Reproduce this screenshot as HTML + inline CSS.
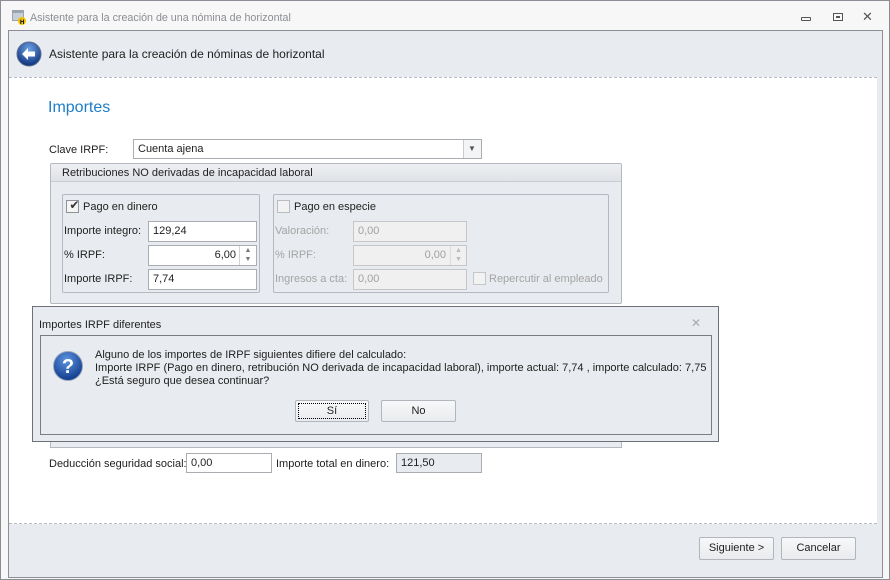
<!DOCTYPE html>
<html><head><meta charset="utf-8"><style>
*{box-sizing:border-box;margin:0;padding:0}
body{width:890px;height:580px;position:relative;background:#f4f4f4;font-family:"Liberation Sans",sans-serif;font-size:11px;color:#1e1e1e;overflow:hidden}
.a{position:absolute}
.t{position:absolute;white-space:nowrap;line-height:14px}
.in{position:absolute;background:#fff;border:1px solid #a9acb1;padding:2px 4px;line-height:14px}
.dis{background:#f0f0f0;border-color:#c4c6ca;color:#a0a0a0}
.g{color:#a4a4a4}
.btn{position:absolute;border:1px solid #b2b6bc;border-radius:2px;background:linear-gradient(#f7f8f9,#e9ebee);text-align:center;line-height:20px}
.cb{position:absolute;width:13px;height:13px;border:1px solid #8e9298;background:#fff}
</style></head><body>
<div class="a" style="left:0;top:0;width:890px;height:580px;border:1px solid #8a8e94;background:#f7f7f7"></div>
<svg class="a" style="left:11px;top:9px" width="16" height="16"><rect x="1" y="1" width="12" height="11" fill="#9aa4ae"/><rect x="2" y="4" width="10" height="7" fill="#c7ced6"/><circle cx="11" cy="12" r="4" fill="#f2c200"/><text x="9" y="15" font-size="6" font-weight="bold" fill="#000">H</text></svg>
<div class="t" style="left:30px;top:11px;color:#8a8d92;font-size:10.7px">Asistente para la creación de una nómina de horizontal</div>
<div class="a" style="left:801px;top:17px;width:10px;height:4px;border:1px solid #555;border-radius:1px"></div>
<div class="a" style="left:833px;top:13px;width:10px;height:8px;border:1px solid #555"></div>
<div class="a" style="left:836px;top:16px;width:4px;height:2px;border:1px solid #555"></div>
<div class="t" style="left:862px;top:10px;font-size:13px;color:#555">✕</div>

<div class="a" style="left:8px;top:30px;width:875px;height:548px;border:1px solid #8c9096;background:#e8ebef"></div>
<svg class="a" style="left:16px;top:41px" width="26" height="26"><defs><radialGradient id="b" cx="0.5" cy="0.3" r="0.7"><stop offset="0" stop-color="#6fa2e6"/><stop offset="1" stop-color="#0c2f7a"/></radialGradient></defs><circle cx="13" cy="13" r="12" fill="url(#b)" stroke="#5b6e8f"/><path d="M6 13 L12 7 L12 10.5 L19 10.5 L19 15.5 L12 15.5 L12 19 Z" fill="#fff"/></svg>
<div class="t" style="left:49px;top:47px;font-size:12px;color:#222">Asistente para la creación de nóminas de horizontal</div>
<div class="a" style="left:9px;top:77px;width:868px;height:447px;background:#fff;border-top:1px dashed #b8bcc2;border-bottom:1px dashed #b8bcc2"></div>

<div class="t" style="left:48px;top:99px;font-size:16px;line-height:18px;color:#1e7ec8">Importes</div>
<div class="t" style="left:49px;top:143px">Clave IRPF:</div>
<div class="in" style="left:133px;top:139px;width:349px;height:20px">Cuenta ajena</div>
<div class="a" style="left:463px;top:140px;width:18px;height:18px;border-left:1px solid #c8cbd0;background:#f3f4f6"></div>
<div class="t" style="left:468px;top:142px;font-size:8px;color:#555">▼</div>

<div class="a" style="left:50px;top:163px;width:572px;height:141px;border:1px solid #b5b9bf;background:#e8ebef;border-radius:2px"></div>
<div class="a" style="left:51px;top:164px;width:570px;height:18px;background:linear-gradient(#eef0f3,#dfe2e6);border-bottom:1px solid #c9ccd1"></div>
<div class="t" style="left:62px;top:166px">Retribuciones NO derivadas de incapacidad laboral</div>

<div class="a" style="left:62px;top:194px;width:198px;height:99px;border:1px solid #b5b9bf;border-radius:2px"></div>
<div class="cb" style="left:66px;top:200px;background:#f4f4f4"></div>
<div class="t" style="left:66px;top:198px;font-size:12px;color:#333">&nbsp;✔</div>
<div class="t" style="left:83px;top:200px">Pago en dinero</div>
<div class="t" style="left:64px;top:224px">Importe integro:</div>
<div class="in" style="left:148px;top:221px;width:109px;height:21px">129,24</div>
<div class="t" style="left:64px;top:248px">% IRPF:</div>
<div class="in" style="left:148px;top:245px;width:109px;height:21px;text-align:right;padding-right:20px">6,00</div>
<div class="a" style="left:239px;top:246px;width:17px;height:19px;border-left:1px solid #d0d3d7;font-size:7px;color:#777;text-align:center;line-height:9px">▲<br>▼</div>
<div class="t" style="left:64px;top:272px">Importe IRPF:</div>
<div class="in" style="left:148px;top:269px;width:109px;height:21px">7,74</div>

<div class="a" style="left:273px;top:194px;width:336px;height:99px;border:1px solid #b5b9bf;border-radius:2px"></div>
<div class="cb" style="left:277px;top:200px;background:#f2f2f2;border-color:#b8bbbf"></div>
<div class="t" style="left:294px;top:200px">Pago en especie</div>
<div class="t g" style="left:275px;top:224px">Valoración:</div>
<div class="in dis" style="left:353px;top:221px;width:114px;height:21px">0,00</div>
<div class="t g" style="left:275px;top:248px">% IRPF:</div>
<div class="in dis" style="left:353px;top:245px;width:114px;height:21px;text-align:right;padding-right:20px">0,00</div>
<div class="a" style="left:450px;top:246px;width:16px;height:19px;border-left:1px solid #d8dadd;font-size:7px;color:#bbb;text-align:center;line-height:9px">▲<br>▼</div>
<div class="t g" style="left:275px;top:272px">Ingresos a cta:</div>
<div class="in dis" style="left:353px;top:269px;width:114px;height:21px">0,00</div>
<div class="cb" style="left:473px;top:272px;background:#f2f2f2;border-color:#c4c6ca"></div>
<div class="t g" style="left:489px;top:272px">Repercutir al empleado</div>

<div class="a" style="left:50px;top:430px;width:572px;height:18px;border:1px solid #b5b9bf;border-top:none;background:#e8ebef"></div>

<div class="a" style="left:32px;top:306px;width:687px;height:136px;border:1px solid #6d7075;background:#e8ebef"></div>
<div class="t" style="left:39px;top:318px">Importes IRPF diferentes</div>
<div class="t" style="left:691px;top:316px;font-size:12px;color:#aaa">✕</div>
<div class="a" style="left:40px;top:335px;width:672px;height:100px;border:1px solid #7a7e83"></div>
<svg class="a" style="left:52px;top:350px" width="32" height="32"><defs><radialGradient id="q" cx="0.45" cy="0.3" r="0.7"><stop offset="0" stop-color="#5d95e0"/><stop offset="1" stop-color="#103a8c"/></radialGradient></defs><circle cx="16" cy="16" r="14.5" fill="url(#q)" stroke="#9aa7bb"/><text x="16" y="23" text-anchor="middle" font-size="20" font-weight="bold" fill="#fff" font-family="Liberation Sans">?</text></svg>
<div class="t" style="left:95px;top:348px">Alguno de los importes de IRPF siguientes difiere del calculado:</div>
<div class="t" style="left:95px;top:361px">Importe IRPF (Pago en dinero, retribución NO derivada de incapacidad laboral), importe actual: 7,74 , importe calculado: 7,75</div>
<div class="t" style="left:95px;top:374px">¿Está seguro que desea continuar?</div>
<div class="btn" style="left:295px;top:400px;width:74px;height:22px"><div style="position:absolute;left:2px;top:2px;right:2px;bottom:2px;border:1px dotted #000"></div>Sí</div>
<div class="btn" style="left:381px;top:400px;width:75px;height:22px">No</div>

<div class="t" style="left:49px;top:457px">Deducción seguridad social:</div>
<div class="in" style="left:186px;top:453px;width:86px;height:20px">0,00</div>
<div class="t" style="left:276px;top:457px">Importe total en dinero:</div>
<div class="in" style="left:396px;top:453px;width:86px;height:20px;background:#e8ebef">121,50</div>

<div class="btn" style="left:699px;top:537px;width:75px;height:23px">Siguiente &gt;</div>
<div class="btn" style="left:781px;top:537px;width:75px;height:23px">Cancelar</div>
</body></html>
